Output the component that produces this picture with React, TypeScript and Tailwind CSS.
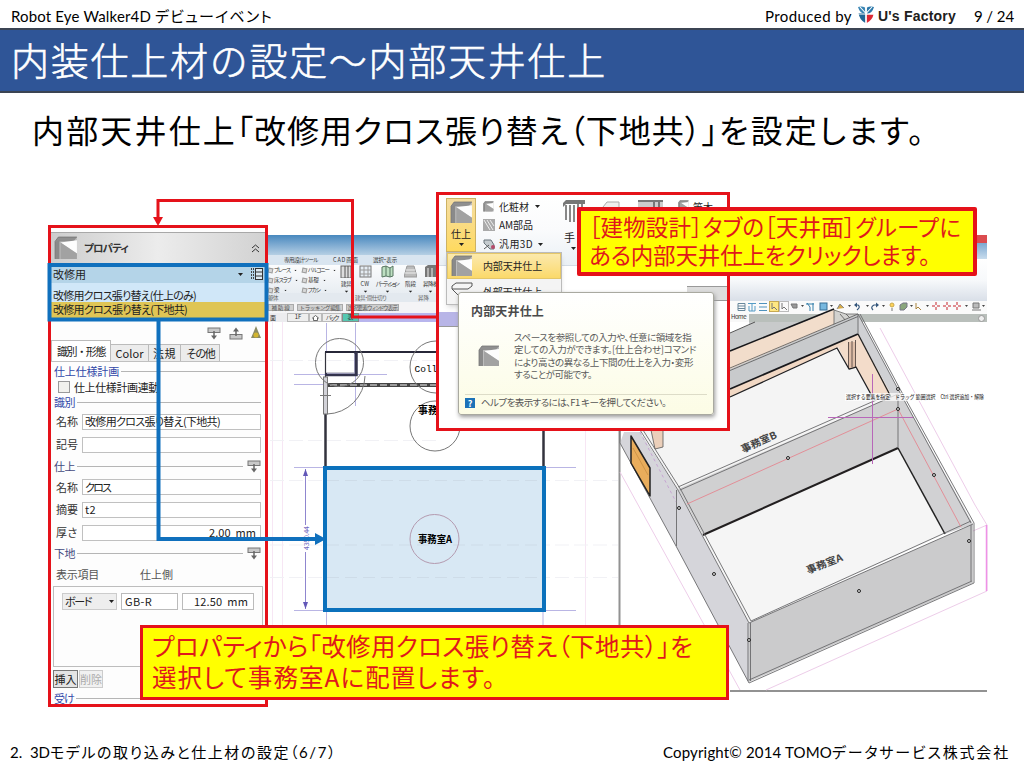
import { useLayoutEffect, useRef, useState, type ReactNode } from "react";

/** One line of text whose tracking is computed so that it spans `w` pixels. */
function Fit({ w, className = "", children }: { w: number; className?: string; children: string }) {
  const ref = useRef<HTMLSpanElement>(null);
  const [ls, setLs] = useState(0);
  useLayoutEffect(() => {
    if (!ref.current) return;
    const natural = ref.current.getBoundingClientRect().width;
    setLs((w - natural) / Math.max(1, children.length));
  }, []);
  return (
    <span
      ref={ref}
      className={`inline-block shrink-0 whitespace-pre ${className}`}
      style={{ letterSpacing: ls }}
    >
      {children}
    </span>
  );
}

const PALT = "[font-feature-settings:'palt']";

function Logo() {
  return (
    <svg width="16" height="18" viewBox="0 0 16 18" className="shrink-0">
      <path d="M0 1 Q4 0 7 1.500 L7.500 8 Q2 8 0 1Z" fill="#3a86b4" />
      <path d="M16 1 Q12 0 9 1.500 L8.500 8 Q14 8 16 1Z" fill="#2b78aa" />
      <path d="M0.500 7 H7.300 V17 Q1.500 14 0.500 7Z" fill="#1f6695" />
      <path d="M15.500 8.500 H8.700 V17 Q14.500 14 15.500 8.500Z" fill="#dc2733" />
      <path d="M2 1 L8 7.500 L14 1 M8 0 V17 M0 8 H16" stroke="#fff" strokeWidth="1.100" fill="none" />
    </svg>
  );
}

function WallIcon({ size = 22 }: { size?: number }) {
  return (
    <svg width={size} height={size} viewBox="0 0 22 22" className="shrink-0">
      <path d="M1 5 L4 1 H21 V18 L18 21 H1Z" fill="#bcbcbc" />
      <path d="M1 5 L4 1 H21 L18 5Z" fill="#8f8f8f" />
      <path d="M1 5 L5 4 V21 H1Z" fill="#8a8a8a" />
      <path d="M6 6 L21 4 V16Z" fill="#fdfdfd" />
      <path d="M6 6 L21 16 V21 H6Z" fill="#a2a2a2" />
      <path d="M1 21 V5 L4 1 H21" fill="none" stroke="#777" strokeWidth="0.800" />
    </svg>
  );
}

function PinIcon({ up = false }: { up?: boolean }) {
  return (
    <svg width="14" height="13" viewBox="0 0 14 13" className={`shrink-0 ${up ? "rotate-180" : ""}`}>
      <rect x="1" y="1" width="12" height="4.500" fill="#c9c9c9" stroke="#777" />
      <path d="M7 4 V10" stroke="#666" strokeWidth="1.500" />
      <path d="M4 8.500 H10 L7 12.500Z" fill="#666" />
    </svg>
  );
}

function Caret() {
  return (
    <svg width="5" height="3" viewBox="0 0 5 3" className="shrink-0">
      <path d="M0 0 H5 L2.500 3Z" fill="#222" />
    </svg>
  );
}

function SectionLine({ label, w, icon, className }: { label: string; w: number; icon?: boolean; className: string }) {
  return (
    <div className={`flex items-center pl-[3px] pr-1 ${className}`}>
      <Fit w={w} className="text-[11px]">{label}</Fit>
      <span className="ml-0.5 h-px flex-1 bg-[#b5b5b5]" />
      {icon && <span className="ml-1"><PinIcon /></span>}
    </div>
  );
}

function Field({ label, value, w, className, right }: { label: string; value: string; w: number; className: string; right?: boolean }) {
  return (
    <div className={`flex items-center pl-[5px] pr-1 ${className}`}>
      <span className="w-[26px] text-[11px] text-[#333]">{label}</span>
      <div className={`flex h-[16px] flex-1 items-center overflow-hidden border border-[#c0c0c0] bg-white px-[2px] text-[11px] text-[#222] ${right ? "justify-end pr-1" : ""}`}>
        {value && <Fit w={w} className={PALT}>{value}</Fit>}
      </div>
    </div>
  );
}

function PropertyPanel() {
  return (
    <section className="absolute left-[48px] top-[65px] flex h-[482px] w-[220px] flex-col overflow-hidden border-[3px] border-[#e5121a] bg-[#fdfdfd] leading-none text-[#222]">
      <div className="mt-1 flex h-[31px] shrink-0 items-center border-t border-[#a8a8a8] bg-linear-to-r from-[#cdcdcd] via-[#ececec] to-[#d2d2d2] px-[3px]">
        <WallIcon size={24} />
        <Fit w={44} className={`ml-[6px] text-[10.500px] font-bold text-[#333] ${PALT}`}>プロパティ</Fit>
        <svg width="9" height="9" viewBox="0 0 9 9" className="ml-auto mr-0.5">
          <path d="M1 4 L4.500 1 L8 4 M1 8 L4.500 5 L8 8" fill="none" stroke="#333" />
        </svg>
      </div>
      <div className="mt-[2px] flex h-[18px] shrink-0 items-center bg-[#b4d4e8] px-[2px] text-[11px]">
        <Fit w={33}>改修用</Fit>
        <span className="ml-auto mr-[7px]"><Caret /></span>
        <svg width="13" height="12" viewBox="0 0 13 12">
          <rect x="5.500" y="0.500" width="7" height="11" fill="#dbe9f2" stroke="#333" />
          <path d="M5 4 H13 M5 8 H13" stroke="#333" />
          <path d="M1.500 0 V12 M3.500 0 V12" stroke="#444" strokeDasharray="2 1" />
        </svg>
      </div>
      <div className="flex h-[19px] shrink-0 items-end bg-[#d0e7f8] px-[2px] pb-px text-[11px]">
        <Fit w={143} className={PALT}>改修用クロス張り替え(仕上のみ)</Fit>
      </div>
      <div className="flex h-[17px] shrink-0 items-start bg-[#dfc555] px-[2px] pt-[2px] text-[11px]">
        <Fit w={134} className={PALT}>改修用クロス張り替え(下地共)</Fit>
      </div>
      <div className="flex h-[21px] shrink-0 items-end justify-end gap-2 pr-1">
        <PinIcon />
        <PinIcon up />
        <svg width="10" height="14" viewBox="0 0 10 14"><path d="M5 0 L7 5 L10 12 H0 L3 5Z" fill="#8b8b62" /><circle cx="5" cy="9" r="2.500" fill="#d2b52f" /></svg>
      </div>
      <div className="flex h-[22px] shrink-0 items-end border-b border-[#c0c0c0] text-[11px]">
        <div className="flex h-[21px] w-[60px] items-center justify-center border-x border-t border-[#bbb] bg-white"><Fit w={48}>識別・形態</Fit></div>
        <div className="flex h-[17px] w-[38px] items-center justify-center border-r border-t border-[#bbb] bg-[#ececec]"><Fit w={28}>Color</Fit></div>
        <div className="flex h-[17px] w-[32px] items-center justify-center border-r border-t border-[#bbb] bg-[#ececec]"><Fit w={23}>法規</Fit></div>
        <div className="flex h-[17px] w-[39px] items-center justify-center border-r border-t border-[#bbb] bg-[#ececec]"><Fit w={28}>その他</Fit></div>
      </div>
      <SectionLine label="仕上仕様計画" w={65} className="h-[18px] shrink-0 text-[#3148a8]" />
      <div className="flex h-[14px] shrink-0 items-center pl-[7px] text-[11px]">
        <span className="mr-1 size-3 shrink-0 border border-[#999] bg-[#f1f1ed]" />
        <Fit w={85}>仕上仕様計画連動</Fit>
      </div>
      <SectionLine label="識別" w={21} className="h-[16px] shrink-0 text-[#3148a8]" />
      <Field label="名称" value="改修用クロス張り替え(下地共)" w={135} className="h-[23px] shrink-0" />
      <Field label="記号" value="" w={1} className="h-[23px] shrink-0" />
      <SectionLine label="仕上" w={21} icon className="h-[20px] shrink-0 text-[#444a80]" />
      <Field label="名称" value="クロス" w={25} className="h-[22px] shrink-0" />
      <Field label="摘要" value="t2" w={11} className="h-[23px] shrink-0" />
      <Field label="厚さ" value="2.00  mm" w={47} right className="h-[23px] shrink-0" />
      <SectionLine label="下地" w={21} icon className="h-[19px] shrink-0 text-[#444a80]" />
      <div className="flex h-[23px] shrink-0 items-center pl-[5px] text-[11px] text-[#555]">
        <Fit w={43}>表示項目</Fit>
        <Fit w={33} className="ml-[41px]">仕上側</Fit>
      </div>
      <div className="mx-0.5 flex h-[81px] shrink-0 items-start gap-1 border border-[#bdbdbd] p-[6px] pl-2 text-[11px]">
        <div className="flex h-[17px] w-[55px] items-center justify-between border border-[#ccc] bg-[#eee] px-0.5"><Fit w={26} className={PALT}>ボード</Fit><Caret /></div>
        <div className="flex h-[17px] w-[57px] items-center border border-[#bbb] bg-white px-[3px]"><Fit w={27}>GB-R</Fit></div>
        <div className="flex h-[17px] w-[72px] items-center justify-end border border-[#bbb] bg-white pr-[5px]"><Fit w={54}>12.50  mm</Fit></div>
      </div>
      <div className="mt-[3px] flex h-[18px] shrink-0 gap-px pl-0.5 text-[11px]">
        <div className="flex w-[25px] items-center justify-center border border-[#777] bg-[#e4e4e4]">挿入</div>
        <div className="flex w-[24px] items-center justify-center border border-[#ccc] bg-[#f1f1f1] text-[#aaa]">削除</div>
      </div>
      <SectionLine label="受け" w={20} className="mt-[3px] h-[15px] shrink-0 text-[#3148a8]" />
    </section>
  );
}

function RibbonItem({ label, w }: { label: string; w: number }) {
  return (
    <div className="flex items-center gap-px">
      <span className="size-[5px] shrink-0 rotate-12 border border-[#9e9e9e] bg-[#d7d7d7]" />
      <Fit w={w} className={PALT}>{label}</Fit>
      <span className="ml-[2px] scale-50"><Caret /></span>
    </div>
  );
}

function RibbonButton({ label, w, kind, box }: { label: string; w: number; kind: ReactNode; box: string }) {
  return (
    <div className={`flex shrink-0 flex-col items-center gap-[3px] ${box}`}>
      <svg width="13" height="13" viewBox="0 0 13 13">{kind}</svg>
      <Fit w={w} className={PALT}>{label}</Fit>
      <span className="scale-75"><Caret /></span>
    </div>
  );
}

function CadRibbon() {
  return (
    <div className="absolute left-[268px] top-[75px] w-[172px] overflow-hidden text-[5.500px] leading-[6px] text-[#333]">
      <div className="h-[20px] bg-linear-to-b from-[#4788be] to-[#b5cfe4]" />
      <div className="flex h-[10px] items-center bg-[#d9e5f0] pl-[16px]">
        <Fit w={34} className={PALT}>専用設計ツール</Fit>
        <Fit w={26} className="ml-[15px]">CAD画面</Fit>
        <Fit w={24} className={`ml-[14px] ${PALT}`}>選択・表示</Fit>
      </div>
      <div className="flex h-[28px] items-start bg-linear-to-b from-[#fbfcfd] to-[#e8edf2]">
        <div className="flex w-[34px] shrink-0 flex-col gap-[4px] pt-0.5">
          <RibbonItem label="ブレース" w={16} /><RibbonItem label="床スラブ" w={17} /><RibbonItem label="梁" w={6} />
        </div>
        <div className="flex w-[34px] shrink-0 flex-col gap-[4px] pt-0.5">
          <RibbonItem label="バルコニー" w={21} /><RibbonItem label="基礎" w={11} /><RibbonItem label="フカシ" w={12} />
        </div>
        <RibbonButton box="w-[20px]" label="建具" w={10} kind={<><rect x="1" y="1" width="10" height="12" fill="#ddd" stroke="#666" /><path d="M5 1 V13 M8 1 V13" stroke="#555" /></>} />
        <RibbonButton box="w-[18px]" label="CW" w={9} kind={<><rect x="1" y="1" width="11" height="11" fill="#e5edf4" stroke="#777" /><path d="M1 5 H12 M1 9 H12 M5 1 V12 M9 1 V12" stroke="#999" /></>} />
        <RibbonButton box="w-[26px]" label="パーティション" w={22} kind={<path d="M1 2 L5 1 V11 L1 12Z M5 1 L9 3 V12 L5 11 M9 3 L12 1 V11 L9 12" fill="#bde0c2" stroke="#567561" />} />
        <RibbonButton box="w-[21px]" label="階段" w={11} kind={<><path d="M3 1 H10 L13 12 H0Z" fill="#bbb" stroke="#999" /><path d="M2 5 H11 M1 8 H12" stroke="#eee" /></>} />
        <RibbonButton box="w-[19px]" label="昇降機" w={15} kind={<><path d="M1 2 L4 0 H13 V12 H1Z" fill="#777" /><path d="M4 3 V12 M8 3 V12" stroke="#eee" /></>} />
      </div>
      <div className="flex h-[9px] items-center bg-[#e3e9ef] text-[#666]">
        <Fit w={10}>躯体</Fit><Fit w={31} className={`ml-[77px] ${PALT}`}>建具・間仕切り</Fit><Fit w={11} className="ml-[32px]">昇降</Fit>
      </div>
      <div className="flex h-[11px] items-center gap-[3px] bg-[#f4f4f6] text-[#555]">
        <span className="flex h-[7px] w-[26px] items-center justify-center border border-[#aaa] bg-[#cfcfcf]"><Fit w={19}>補助線</Fit></span>
        <span className="flex h-[7px] w-[46px] items-center justify-center border border-[#aaa] bg-[#cfcfcf]"><Fit w={41}>トラッキング編集</Fit></span>
        <span className="flex h-[7px] w-[53px] items-center justify-center border border-[#aaa] bg-[#cfcfcf]"><Fit w={50} className={PALT}>選択要素ウィンドウ表示</Fit></span>
      </div>
      <div className="flex h-[9px] items-center bg-[#ececef] text-[6px]">
        <span className="w-[19px] pl-0.5">面</span>
        <span className="h-[9px] w-[22px] border border-[#bbb] bg-[#eee] text-center">1F</span>
        <span className="flex h-[9px] w-[13px] items-center justify-center border border-[#bbb] bg-[#eee]">
          <svg width="7" height="6" viewBox="0 0 7 6"><path d="M3.500 0.500 L6.500 3 H5.500 V5.500 H1.500 V3 H0.500Z" fill="#fff" stroke="#444" strokeWidth="0.800" /></svg>
        </span>
        <span className="flex h-[9px] w-[20px] items-center justify-center border border-[#bbb] bg-[#eee]"><Fit w={12} className={PALT}>バック</Fit></span>
        <span className="h-[9px] w-[17px] border border-[#888] bg-[#55c8b2] text-center">表</span>
        <span className="h-[9px] flex-1 bg-[#b8b5ed]" />
      </div>
    </div>
  );
}

function ViewToolbar() {
  return (
    <div className="absolute left-[729px] top-[75px] w-[258px] leading-none">
      <div className="flex h-[24px] flex-col items-end bg-linear-to-b from-[#5790c2] to-[#c8dced]">
        <span className="h-[8px] w-[13px] bg-[#db4c4f]" />
      </div>
      <div className="h-[42px] bg-linear-to-b from-white via-[#f7f9fb] to-[#d9dfe8]" />
      <div className="h-[13px] bg-[#fafafa]">
        <svg width="258" height="12" viewBox="729 302 258 12">
          <g fill="none" strokeWidth="1">
            <path d="M738 304.500 H745 V311.500 H738Z M738 307 H745 M738 309.500 H745" stroke="#68879b" />
            <path d="M748 304.500 H756 M752 304 V312 M749 307 V312 H755 V307" stroke="#559bc5" />
            <path d="M759 304.500 H767 M759 308 H767 M759 311.500 H767" stroke="#4f92bd" />
            <rect x="769.500" y="302.500" width="9" height="10" fill="#ffe782" stroke="#c7a952" />
            <path d="M772 304 V310 L774 308 L777 311 M782 304 V310 L784 308 L787 311" stroke="#777" />
            <rect x="779.500" y="302.500" width="9" height="10" stroke="#bbb" />
            <path d="M791 305 H797 V309 H793Z" fill="#999" stroke="#777" />
            <path d="M807 304 L810 308 V312 M813 304 V312 M806 305 H814" stroke="#327eaa" />
            <rect x="820" y="304" width="7" height="7" fill="#77b8df" stroke="#386f96" />
            <path d="M837 310 L840 305 L844 309" fill="#d6ac4a" stroke="#888" />
            <path d="M855 306 H858 Q861 308 857 311" stroke="#35577c" strokeWidth="1.200" />
            <path d="M857 303.500 L854 306 L857 308.500Z" fill="#35577c" />
            <path d="M878 306 H874 Q870 308 873 311" stroke="#35577c" strokeWidth="1.200" />
            <path d="M876 303.500 L879 306 L876 308.500Z" fill="#35577c" />
            <circle cx="892" cy="306" r="2" fill="#ffd257" stroke="#c9a84b" /><path d="M892 309 V312" stroke="#777" />
            <path d="M900 311 V306 L903 304 H907 V308 L904 311Z" fill="#8aa67c" stroke="#778" />
            <path d="M916 304 V310 L918 308 L921 311" stroke="#aa843d" />
            <g stroke="#d86b70" strokeWidth="1.500" strokeDasharray="3 2"><path d="M932 307 H940 M936 303 V311 M943 307 H951 M947 303 V311 M953 307 H961 M957 303 V311" /></g>
            <path d="M973 304 H979 V309 H973Z M972 311 H981" stroke="#777" fill="#bbb" />
          </g>
          {[801, 830, 848, 866, 882, 910, 926, 965, 982].map((x) => <path key={x} d={`M${x} 306 h3 l-1.500 2Z`} fill="#444" />)}
        </svg>
      </div>
      <div className="flex h-[8px] items-center bg-[#b9bfbb] text-[6px] text-[#333]">
        <span className="h-full w-[20px] bg-[#f8f8f8] pl-0.5"><Fit w={15}>Home</Fit></span>
        <span className="ml-auto mr-0.5 size-[7px] rounded-full border border-[#999] bg-[#eee]" />
      </div>
    </div>
  );
}

function CadDrawing() {
  const nodes = [[788, 458], [898, 409], [934, 475], [679, 508], [714, 574], [859, 591], [969, 541], [749, 640], [898, 389]];
  return (
    <svg className="absolute left-0 top-0" width="1024" height="560" viewBox="0 160 1024 560" fontFamily="'Noto Sans CJK JP', sans-serif">
      <g fill="none" strokeWidth="1">
        <path d="M585.500 430 V625 M272.500 322 V692 M282.500 322 V692" stroke="#f7e6f4" />
        <path d="M270 480.500 H618 M270 545 H618 M270 577.500 H618 M270 360.500 H437 M270 440.500 H437" stroke="#f1f1f5" strokeDasharray="14 5" />
        <path d="M326.500 323 V352 M355.500 323 V406 M294 374.500 H387 M294 384.500 H345 M294 467.500 H576 M294 610.500 H576 M326.500 611 V626 M543 611 V626" stroke="#b9b5e4" />
        <path d="M305.500 469 V525 M305.500 552 V609" stroke="#8f86cf" />
        <path d="M305.500 469 L303 476 H308Z M305.500 609 L303 602 H308Z" fill="#6257b8" />
        <path d="M325.500 377 V352" stroke="#33333e" strokeWidth="1.200" />
        <path d="M325 352 H440" stroke="#272738" strokeWidth="2" />
        <path d="M325.500 414 V468" stroke="#33333e" strokeWidth="2.500" />
        <path d="M325 374.500 H356 V352" stroke="#34344d" strokeWidth="3.500" />
        <path d="M327 373.500 H354.500 V354" stroke="#9897b5" strokeWidth="1" />
        <path d="M325 385 H438" stroke="#444" strokeWidth="4" /><path d="M330 385 H438" stroke="#bbb" strokeWidth="1.500" strokeDasharray="7 3" />
        <rect x="323.500" y="377" width="4" height="37" fill="#d2d2d8" stroke="#777" />
        <path d="M365 376 A39 39 0 0 1 327 414 M320 395.500 H331" stroke="#777" />
        <circle cx="339.500" cy="362.500" r="24" stroke="#777" /><circle cx="436" cy="367" r="26" stroke="#777" /><circle cx="435" cy="426" r="25" stroke="#777" />
        <path d="M543.500 430 V466" stroke="#33333e" strokeWidth="2.500" />
      </g>
      <text x="414.500" y="372" fontSize="9.500" fontFamily="'Liberation Mono', monospace">Colli</text>
      <text x="418" y="414" fontSize="10" fontWeight="bold">事務</text>
      <text transform="translate(308.500 550) rotate(-90)" fontSize="7" fill="#7166c0" textLength="24">4350.44</text>
      <rect x="325" y="468" width="219" height="142" fill="#d8e8f4" stroke="#0b71bc" strokeWidth="4" />
      <path d="M327 480.500 H541 M327 545 H541 M327 577.500 H541" stroke="#cedce8" strokeDasharray="12 6" />
      <circle cx="434.500" cy="539" r="24.500" fill="none" stroke="#b49aaf" />
      <text x="418" y="543" fontSize="10" fontWeight="bold" textLength="34" lengthAdjust="spacingAndGlyphs">事務室A</text>

      <g strokeLinejoin="round">
        <path d="M619.500 430 V692 M730 691 H987" stroke="#929292" strokeWidth="2" />
        <path d="M880 328 L975 505 L987 525 V591 L766 690 M620 472 L740 690 M987 525 L973 531" fill="none" stroke="#edcde9" />
        <path d="M986.500 525 V591" stroke="#ee91e7" strokeWidth="1.500" />
        <path d="M640 428 L730 390 L838 346 L898 394 L678 490Z" fill="#f4f4f4" />
        <path d="M730 333 L749 325 V322 H858 V334 L730 392Z" fill="#c8cacb" />
        <path d="M730 351 L834 310 V326 L730 370Z" fill="#f2ddcb" />
        <path d="M834 310 V326 L858 316 V314 H846Z" fill="#d2d2d0" stroke="#555" strokeWidth="0.700" />
        <path d="M840 314 L846 321 M846 314 L851 319" stroke="#555" strokeWidth="0.800" />
        <path d="M730 351 L834 309" stroke="#17171a" strokeWidth="1.500" />
        <path d="M730 333 L755 322" stroke="#555" />
        <path d="M730 369 L858 314 V334 L730 389Z" fill="#c8cacc" />
        <path d="M730 368 L858 314 M730 370.500 L858 316.500" stroke="#555" strokeWidth="0.800" />
        <path d="M730 389 L858 334 V338 L730 397Z" fill="#f1d8c4" />
        <path d="M838 347 L858 334 L892 396 L872 395 L856 367 L849 369Z" fill="#f3dcca" />
        <path d="M848 342 H856 V367 L849 369Z" fill="#e0bfa9" />
        <path d="M848.500 342 V368 M855.500 340 V367 M852 341 V367" stroke="#574a45" strokeWidth="0.900" />
        <path d="M730 389 L858 334" stroke="#19191c" strokeWidth="1.800" />
        <path d="M730 397 L837 348 L849 369 L856 367 L873 398" fill="none" stroke="#1f1f22" strokeWidth="1.300" />
        <path d="M858 314 L898 389 V396 H892 L858 334Z" fill="#d0d1d4" />
        <path d="M858 334 L891 397" stroke="#222" strokeWidth="1.300" />
        <path d="M678 489 L898 394 V448 L703 535Z" fill="#d0d0d1" />
        <path d="M898 389 L973 524 L945 534 L898 448Z" fill="#d1d1d3" />
        <path d="M703 535 L898 448 L945 534 L749 623Z" fill="#f5f5f5" />
        <path d="M624 432 H640 L678 490 L749 623 V683 L676 546 L620 443Z" fill="#d5d5da" />
        <path d="M749 623 L973 524 V583 L749 682Z" fill="#cbcbcc" />
        <path d="M703 535 L898 448" stroke="#221f20" strokeWidth="2" />
        <path d="M898 448 L945 534" stroke="#222" strokeWidth="1.500" />
        <g fill="none" stroke="#6a6a6c" strokeWidth="0.900">
          <path d="M858 314 V334 M860 314 L900 389 L974 523 V583 L749 683 L676 546 L620 443 V430 M858 314 L898 389 L971 523" />
          <path d="M640 430 L678 490 L749 623 L973 524 M643 430 L681 490 L751 621 L971 521 M678 487 L890 394 M680 490 L898 394 V448" />
          <path d="M676.500 490 V546 M748 623 V681 M750.500 623 V681 M971 525 V581 M749 680 L972 581" />
        </g>
        <path d="M631 436 L650 468 V496 L631 463Z" fill="#e9ad5c" stroke="#222" strokeWidth="1.500" />
        <path d="M633 448 L648 475" stroke="#c98f42" strokeWidth="0.800" />
        <path d="M651 430 H663 V447 L655 449Z" fill="#ebcfba" stroke="#555" strokeWidth="0.800" />
        <path d="M640 432 L676 502" stroke="#c090cf" strokeWidth="0.700" strokeDasharray="3 3" />
        <path d="M687 504 L898 409 L961 527" fill="none" stroke="#e48791" strokeWidth="0.900" />
        <path d="M872.500 374 V464 M828 417.500 H913" stroke="#b867b9" />
        {nodes.map(([x, y]) => <circle key={`${x}-${y}`} cx={x} cy={y} r="1.500" fill="#ddd" stroke="#222" />)}
      </g>
      <rect x="845" y="393" width="140" height="8" fill="#fff" opacity="0.700" />
      <text x="846" y="399" fontSize="5.800" fill="#222" textLength="138" lengthAdjust="spacingAndGlyphs">選択する要素を指定　ドラッグ 範囲選択　Ctrl 選択追加・解除</text>
      <text transform="translate(743 453) rotate(-24)" fontSize="10" fontWeight="bold" fill="#444" textLength="38" lengthAdjust="spacingAndGlyphs">事務室B</text>
      <text transform="translate(808 574) rotate(-21)" fontSize="10" fontWeight="bold" fill="#444" textLength="38" lengthAdjust="spacingAndGlyphs">事務室A</text>
    </svg>
  );
}

function CommandPopup() {
  return (
    <section className="absolute left-[436px] top-[32px] h-[239px] w-[294px] overflow-hidden border-[3px] border-[#e5121a] bg-white leading-none text-[#222]">
      <div className="flex h-[71px] items-start border-b border-[#d4dce5] bg-linear-to-b from-white via-[#fafbfc] to-[#eaf0f5] pl-[7px] pt-[3px]">
        <div className="flex h-[54px] w-[30px] shrink-0 flex-col items-center border border-[#cdb263] bg-linear-to-b from-[#f5dda0] to-[#ffda5e] pt-[2px]">
          <WallIcon size={23} />
          <Fit w={20} className="mt-[5px] text-[10px]">仕上</Fit>
          <span className="mt-[4px]"><Caret /></span>
        </div>
        <div className="ml-[7px] flex w-[80px] shrink-0 flex-col gap-[7px] pt-[3px]">
          <div className="flex items-center gap-[5px]"><WallIcon size={11} /><Fit w={30} className="text-[10px]">化粧材</Fit><span className="ml-px"><Caret /></span></div>
          <div className="flex items-center gap-[4px]">
            <svg width="12" height="12" viewBox="0 0 12 12"><rect width="12" height="12" fill="#aaa" /><path d="M1 1 L7 11 M4 1 L10 11 M7 1 L11 7" stroke="#eee" /></svg>
            <Fit w={34} className="text-[10px]">AM部品</Fit>
          </div>
          <div className="flex items-center gap-[4px]">
            <svg width="12" height="12" viewBox="0 0 12 12"><path d="M1 2 H8 L11 7 V11 H7 L1 5Z" fill="#c4cbcf" stroke="#68747c" /><path d="M1 11 L6 7" stroke="#555" /><circle cx="10" cy="9" r="2" fill="#b4496a" /></svg>
            <Fit w={34} className="text-[10px]">汎用3D</Fit><span className="ml-px"><Caret /></span>
          </div>
        </div>
        <div className="flex w-[30px] shrink-0 flex-col items-start gap-[9px] pt-[2px]">
          <svg width="23" height="23" viewBox="0 0 23 23"><path d="M0 3 L3 0 H22 V4 H3 L0 7Z" fill="#777" /><path d="M3 5 V20 M7 5 V22 M11 5 V22 M15 4 V22 M19 4 V20" stroke="#888" strokeWidth="2" /></svg>
          <Fit w={11} className="ml-[1px] text-[11px]">手</Fit>
          <span className="-mt-[5px] ml-[8px]"><Caret /></span>
        </div>
        <svg width="62" height="16" viewBox="0 0 62 16" className="ml-[9px] mt-[1px] shrink-0">
          <path d="M1 8 L5 3 H17 V16 H1Z" fill="#eee" stroke="#aaa" /><path d="M36 1 H61 V16 H46 V8 H36Z" fill="#ccc" /><path d="M36 2 H61 M52 2 V16 M57 2 V16" stroke="#777" strokeWidth="2" />
        </svg>
        <span className="ml-[14px] mt-[2px]"><WallIcon size={11} /></span>
        <Fit w={20} className="ml-1 mt-[4px] text-[10px]">笠木</Fit>
      </div>
      <div className="flex justify-between pt-[48px]">
        <span className="-mt-[2px] h-[15px] w-[20px] border-b border-[#999] bg-[#b8b5e7]" />
        <span className="-mt-[28px] h-[15px] w-[40px] border-y border-[#999] bg-[#ddd]" />
      </div>
      <div className="absolute left-[7px] top-[57px] h-[53px] w-[116px] border border-[#bbb] bg-[#f4f4f4] shadow-md">
        <div className="flex h-[26px] items-center gap-[10px] border border-[#e4c769] bg-linear-to-b from-[#fbe9ac] to-[#fbd969] pl-[3px]">
          <WallIcon size={22} /><Fit w={59} className="text-[10px]">内部天井仕上</Fit>
        </div>
        <div className="flex h-[25px] items-center gap-[10px] pl-1">
          <svg width="22" height="20" viewBox="0 0 22 20"><path d="M1 4 L5 1 H21 V4 L17 7 H1Z M1 7 L8 14" fill="#f5f5f5" stroke="#555" /></svg>
          <Fit w={59} className="text-[10px]">外部天井仕上</Fit>
        </div>
      </div>
      <div className="absolute left-[19px] top-[97px] flex h-[123px] w-[256px] flex-col rounded-[3px] border border-[#a9a9a0] bg-linear-to-b from-white to-[#fcfce5] px-[6px] shadow-[1px_2px_4px_#999]">
        <Fit w={73} className="ml-[6px] mt-[12px] self-start text-[12px] font-bold text-[#4a4a4a]">内部天井仕上</Fit>
        <div className="mt-[14px] flex h-[52px]">
          <div className="ml-[13px] mt-[14px] w-[36px]"><WallIcon size={22} /></div>
          <div className={`flex flex-col text-[9.500px] leading-[12.400px] text-[#5a5a5a] ${PALT}`}>
            <Fit w={180}>スペースを参照しての入力や、任意に領域を指</Fit>
            <Fit w={182}>定しての入力ができます。[仕上合わせ]コマンド</Fit>
            <Fit w={180}>により高さの異なる上下間の仕上を入力・変形</Fit>
            <Fit w={78} className="self-start">することが可能です。</Fit>
          </div>
        </div>
        <div className="mt-[11px] flex items-center border-t border-[#dddcc8] pt-[3px] text-[9.500px] text-[#555]">
          <span className="flex size-[10px] items-center justify-center bg-[#1c72b8] text-[9px] font-bold text-white">?</span>
          <Fit w={185} className={`ml-[6px] ${PALT}`}>ヘルプを表示するには、F1 キーを押してください。</Fit>
        </div>
      </div>
    </section>
  );
}

function Connectors() {
  return (
    <svg className="absolute left-0 top-0" width="1024" height="560" viewBox="0 160 1024 560">
      <path d="M438 317 H352.500 V200.500 H158 V219" fill="none" stroke="#e5121a" strokeWidth="3" />
      <path d="M153 217 H163 L158 226Z" fill="#e5121a" />
      <rect x="49.500" y="265" width="217" height="54.500" fill="none" stroke="#1070bd" strokeWidth="4" />
      <path d="M158.500 321 V539 H317" fill="none" stroke="#1070bd" strokeWidth="4" />
      <path d="M315 533 L326 539 L315 545Z" fill="#1070bd" />
    </svg>
  );
}

export default function App() {
  return (
    <main className="flex h-[768px] w-[1024px] flex-col overflow-hidden bg-white font-['Noto_Sans','Noto_Sans_CJK_JP',sans-serif] text-black">
      <header className="flex h-[28px] shrink-0 items-center pl-[11px] pr-[10px] pt-1 font-['Lato','Noto_Sans_CJK_JP',sans-serif] text-[15px] leading-none">
        <Fit w={144}>Robot Eye Walker4D </Fit>
        <Fit w={118} className={`text-[15px] ${PALT}`}>デビューイベント</Fit>
        <Fit w={87} className="ml-auto">Produced by</Fit>
        <span className="ml-[6px] mt-[-2px]"><Logo /></span>
        <Fit w={78} className="ml-1 font-['Liberation_Sans',sans-serif] text-[14px] font-bold text-[#202020]">U's Factory</Fit>
        <Fit w={40} className="ml-[18px]">9 / 24</Fit>
      </header>
      <div className="flex h-[65px] shrink-0 items-center border-b-2 border-t-2 border-[#3b4453] bg-[#2f5597] pb-[3px] pl-[11px] text-white">
        <Fit w={596} className="font-['Noto_Sans_CJK_JP',sans-serif] text-[38px] font-light leading-none [-webkit-text-stroke:0.600px_white]">内装仕上材の設定～内部天井仕上</Fit>
      </div>
      <h1 className="flex h-[67px] shrink-0 items-center pl-[32px] pt-[5px] font-['Noto_Sans_CJK_JP',sans-serif] text-[32px] font-normal leading-none">
        <Fit w={205}>内部天井仕上</Fit>
        <Fit w={482} className={PALT}>「改修用クロス張り替え（下地共）」</Fit>
        <Fit w={207} className={PALT}>を設定します。</Fit>
      </h1>
      <div className="relative h-[560px] shrink-0 font-['Noto_Sans_CJK_JP',sans-serif]">
        <CadRibbon />
        <ViewToolbar />
        <CadDrawing />
        <PropertyPanel />
        <CommandPopup />
        <Connectors />
        <div className={`absolute left-[577px] top-[47px] flex h-[69px] w-[400px] flex-col justify-center rounded-[2px] border-4 border-[#e5121a] bg-[#ffff00] pb-[3px] pl-[8px] text-[22.500px] leading-[28px] text-[#e0181c] ${PALT}`}>
          <Fit w={372} className="self-start">［建物設計］タブの［天井面］グループに</Fit>
          <Fit w={341} className="self-start">ある内部天井仕上をクリックします。</Fit>
        </div>
        <div className={`absolute left-[140px] top-[465px] flex h-[75px] w-[589px] flex-col justify-center border-[3px] border-[#e5121a] bg-[#ffff00] pb-[3px] pl-[9px] text-[24.500px] leading-[31px] text-[#e0181c] ${PALT}`}>
          <Fit w={541} className="self-start">プロパティから「改修用クロス張り替え（下地共）」を</Fit>
          <Fit w={344} className="self-start">選択して事務室Aに配置します。</Fit>
        </div>
      </div>
      <footer className="flex flex-1 items-center justify-between pl-[10px] pr-[14px] pt-[16px] font-['Lato','Noto_Sans_CJK_JP',sans-serif] text-[15px] leading-none">
        <div className="flex">
          <Fit w={40}>2.  3D</Fit>
          <Fit w={287} className={PALT}>モデルの取り込みと仕上材の設定（6/7）</Fit>
        </div>
        <div className="flex">
          <Fit w={169}>Copyright© 2014 TOMO</Fit>
          <Fit w={178} className={PALT}>データサービス株式会社</Fit>
        </div>
      </footer>
    </main>
  );
}
